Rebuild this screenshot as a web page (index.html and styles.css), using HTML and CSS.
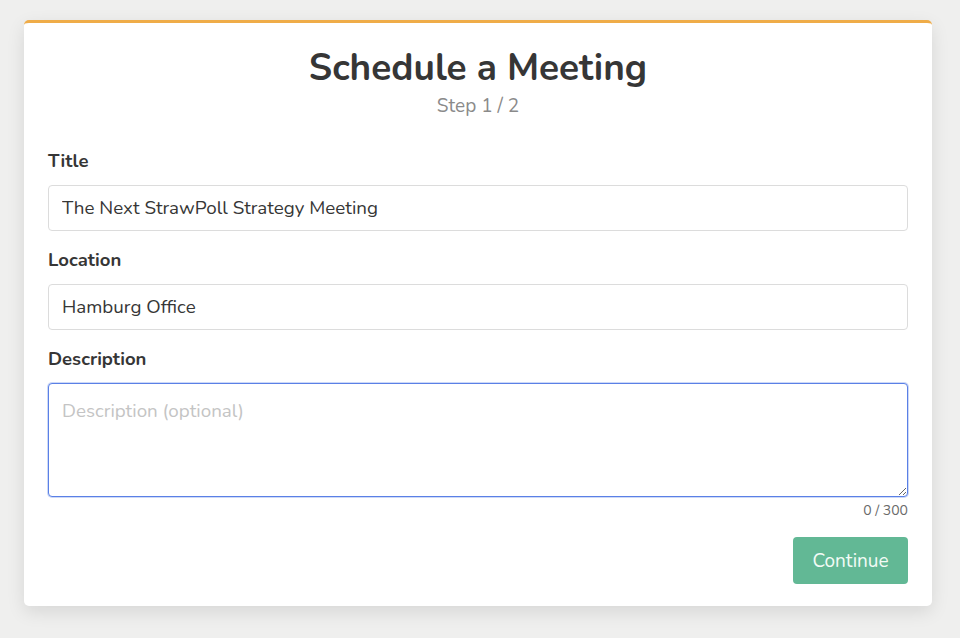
FILE: index.html
```html
<!DOCTYPE html>
<html>
<head>
<meta charset="utf-8">
<link rel="stylesheet" href="styles.css">
</head>
<body>
<div class="card">
  <h1 class="title">Schedule a Meeting</h1>
  <div class="step">Step 1 / 2</div>
  <form class="form">
    <label class="label">Title</label>
    <input class="input" type="text" value="The Next StrawPoll Strategy Meeting">
    <label class="label">Location</label>
    <input class="input" type="text" value="Hamburg Office">
    <label class="label">Description</label>
    <textarea class="textarea" placeholder="Description (optional)"></textarea>
    <div class="counter">0 / 300</div>
    <div class="actions"><button type="button" class="btn">Continue</button></div>
  </form>
</div>
</body>
</html>
```
FILE: styles.css
```css
html, body { margin: 0; padding: 0; }
body {
  background: #efefee;
  font-family: "Nunito", "Lato", "Noto Sans", sans-serif;
  color: #363636;
  padding: 20px 28px 0 24px;
  height: 638px;
  box-sizing: border-box;
  overflow: hidden;
}
.card {
  background: #fff;
  border-top: 3px solid #efac48;
  border-radius: 5px;
  box-shadow: 0 6px 18px rgba(0,0,0,0.10);
  padding: 23px 24px 22px;
}
.title {
  margin: 0;
  text-align: center;
  font-size: 37px;
  line-height: 44px;
  font-weight: 700;
  color: #363636;
}
.step {
  margin-top: 4px;
  text-align: center;
  font-size: 19px;
  line-height: 24px;
  color: #8a8a8a;
}
.form {
  display: flex;
  flex-direction: column;
  margin-top: 31px;
}
.label {
  font-size: 18.5px;
  line-height: 24px;
  font-weight: 700;
  color: #363636;
  margin-bottom: 12px;
}
.input, .textarea {
  font-family: inherit;
  font-size: 18.8px;
  color: #363636;
  border: 1px solid #dcdcdc;
  border-radius: 4px;
  padding: 0 13px;
  box-sizing: border-box;
  width: 100%;
  background: #fff;
  outline: none;
}
.input { height: 46px; margin-bottom: 17px; }
.textarea {
  height: 114px;
  padding-top: 14px;
  border-color: #5a80e6;
  box-shadow: 0 0 0 1px rgba(90,128,230,0.3);
  resize: vertical;
}
.textarea::placeholder { color: #c4c4c4; }
.counter {
  margin-top: 4px;
  text-align: right;
  font-size: 14px;
  line-height: 20px;
  color: #6a6a6a;
}
.actions {
  display: flex;
  justify-content: flex-end;
  margin-top: 16px;
}
.btn {
  font-family: inherit;
  font-size: 19px;
  color: #f2fbf6;
  background: #62b895;
  border: none;
  border-radius: 4px;
  height: 47px;
  width: 115px;
  cursor: pointer;
}
```
